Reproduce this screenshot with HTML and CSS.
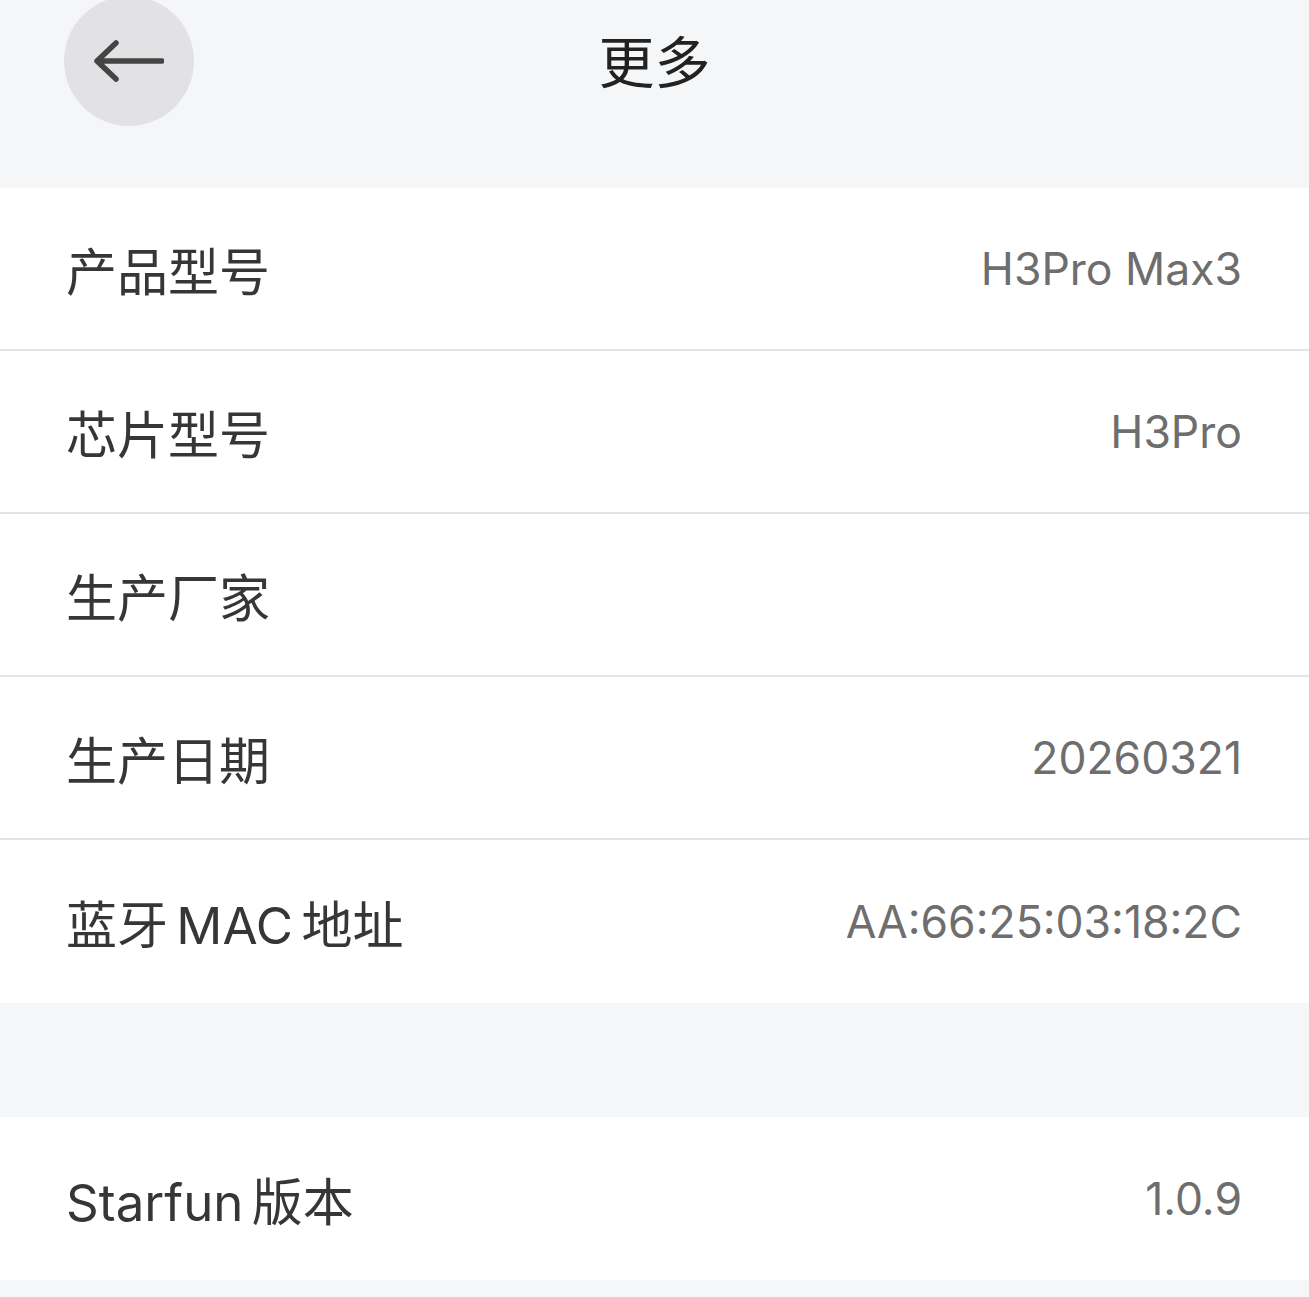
FILE: index.html
```html
<!DOCTYPE html>
<html lang="zh-CN">
<head>
<meta charset="utf-8">
<title>更多</title>
<link rel="stylesheet" href="styles.css">
</head>
<body>
<div class="page">
  <header class="header">
    <div class="nav">
      <button class="back" aria-label="返回">
        <svg width="72" height="44" viewBox="0 0 72 44">
          <path d="M70 22H6M24 4L5 22L24 40" fill="none" stroke="#444" stroke-width="5.5" stroke-linecap="round" stroke-linejoin="round"/>
        </svg>
      </button>
      <h1 class="title">更多</h1>
    </div>
  </header>
  <section class="group">
    <div class="row"><span class="label">产品型号</span><span class="value">H3Pro Max3</span></div>
    <div class="row"><span class="label">芯片型号</span><span class="value">H3Pro</span></div>
    <div class="row"><span class="label">生产厂家</span><span class="value"></span></div>
    <div class="row"><span class="label">生产日期</span><span class="value">20260321</span></div>
    <div class="row"><span class="label">蓝牙 MAC 地址</span><span class="value">AA:66:25:03:18:2C</span></div>
  </section>
  <div class="gap"></div>
  <section class="group">
    <div class="row"><span class="label">Starfun 版本</span><span class="value">1.0.9</span></div>
  </section>
</div>
</body>
</html>
```
FILE: styles.css
```css
html, body {
  margin: 0;
  padding: 0;
  background: #f5f6f8;
}
body {
  font-family: Inter, "Noto Sans CJK SC", sans-serif;
  color: #333;
}
.page {
  width: 1309px;
}
.header {
  height: 188px;
  background: #f5f6f8;
}
.nav {
  position: relative;
  height: 125px;
  display: flex;
  align-items: center;
  justify-content: center;
}
.back {
  position: absolute;
  left: 64px;
  top: -4px;
  width: 130px;
  height: 130px;
  border-radius: 50%;
  border: none;
  background: #e2e2e4;
  display: flex;
  align-items: center;
  justify-content: center;
  padding: 0 2px 0 0;
}
.title {
  margin: 0;
  font-family: "Noto Sans CJK SC", sans-serif;
  font-size: 56px;
  font-weight: 400;
  color: #222;
  transform: translateY(-4px);
}
.group {
  background: #fff;
}
.row {
  height: 161px;
  display: flex;
  align-items: center;
  justify-content: space-between;
  padding: 0 67px 0 66px;
  border-bottom: 2px solid #e4e4e6;
}
.row:last-child {
  height: 163px;
  border-bottom: none;
}
.label {
  font-size: 51px;
  color: #363636;
  word-spacing: -6px;
}
.value {
  font-size: 44.5px;
  color: #6e6e6e;
}
.gap {
  height: 114px;
}
```
